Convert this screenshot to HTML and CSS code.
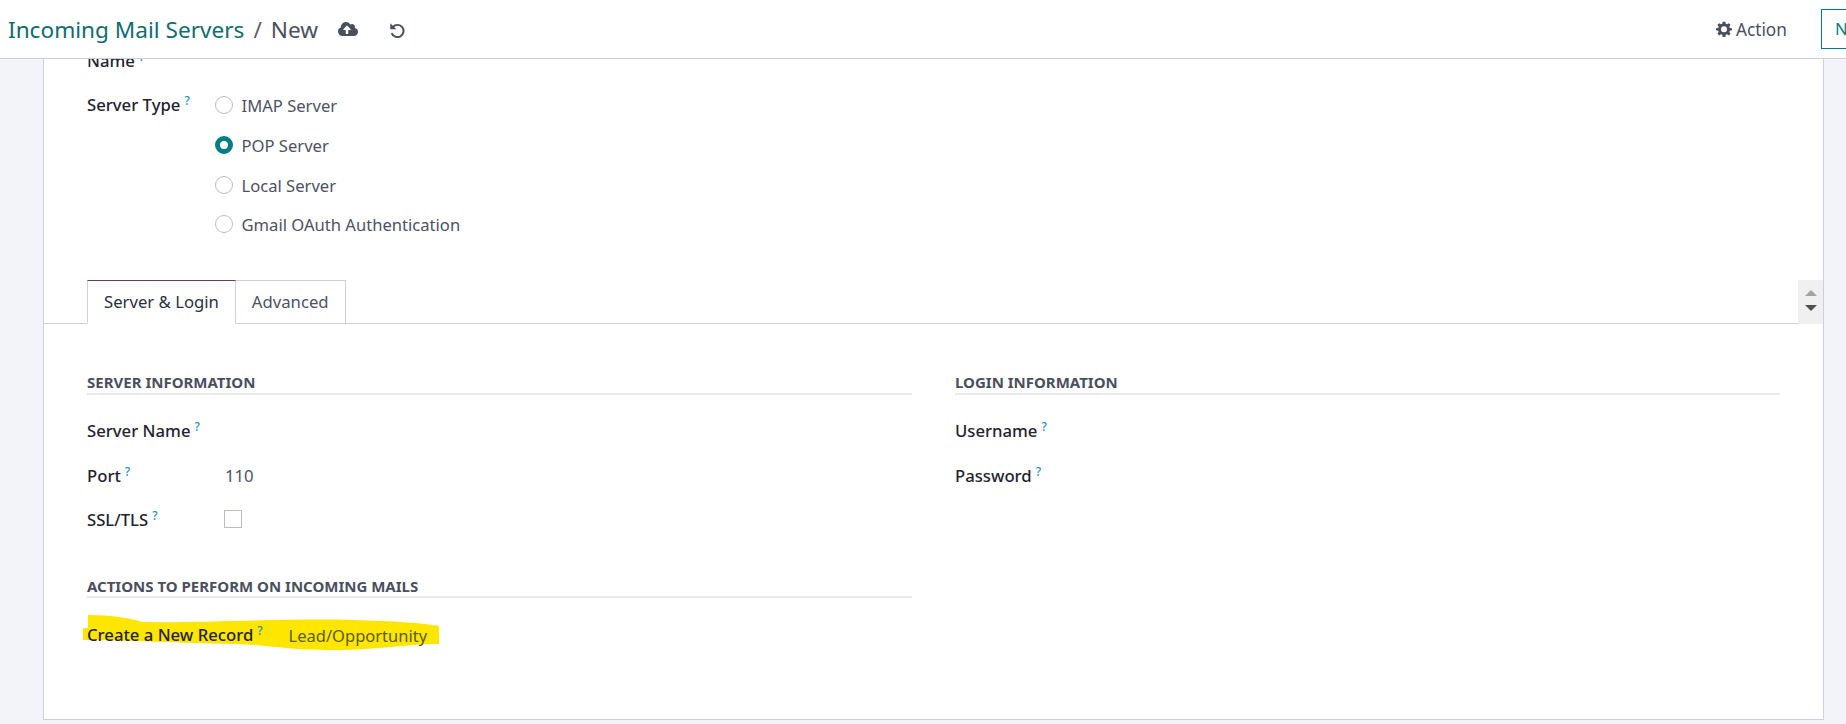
FILE: index.html
```html
<!DOCTYPE html>
<html lang="en">
<head>
<meta charset="utf-8">
<title>Incoming Mail Servers / New</title>
<link rel="stylesheet" href="styles.css">
</head>
<body>
<header class="topbar">
  <div class="crumbs">
    <span class="crumb-link">Incoming Mail Servers</span>
    <span class="crumb-sep">/</span>
    <span class="crumb-cur">New</span>
    <svg class="ico-cloud" viewBox="0 0 640 512"><path fill="#4a4f5e" d="M537.6 226.6c4.1-10.7 6.4-22.4 6.4-34.6 0-53-43-96-96-96-19.7 0-38.1 6-53.3 16.2C367 64.2 315.3 32 256 32c-88.4 0-160 71.6-160 160 0 2.7.1 5.4.2 8.1C40.2 219.8 0 273.2 0 336c0 79.5 64.5 144 144 144h368c70.7 0 128-57.3 128-128 0-61.9-44-113.6-102.4-125.4zM393.4 288H328v112c0 8.8-7.2 16-16 16h-48c-8.8 0-16-7.2-16-16V288h-65.4c-14.3 0-21.4-17.2-11.3-27.3l105.4-105.4c6.2-6.2 16.4-6.2 22.6 0l105.4 105.4c10.1 10.1 2.9 27.3-11.3 27.3z"/></svg>
    <svg class="ico-undo" viewBox="0 0 24 24"><path fill="none" stroke="#4a4f5e" stroke-width="2.8" d="M7 8.2A8.6 8.6 0 1 1 5.2 17"/><path fill="#4a4f5e" d="M3.2 3.2v8.6h8.6z"/></svg>
  </div>
  <div class="top-actions">
    <span class="action"><svg class="ico-gear" viewBox="0 0 24 24"><path fill="#4a4f5e" fill-rule="evenodd" d="M10 1h4l.6 3.2 1.9.8L19.200 3.200l2.600 2.600-1.800 2.700.8 1.900L24 11v3l-3.200.6-.8 1.900 1.800 2.700-2.600 2.600-2.700-1.800-1.900.8L14 24h-4l-.6-3.200-1.900-.8-2.700 1.800-2.600-2.600L4 16.500l-.8-1.900L0 14v-3l3.200-.6.8-1.900-1.800-2.700 2.600-2.600L7.500 5l1.900-.8zM12 8a4.500 4.500 0 1 0 0 9 4.500 4.500 0 0 0 0-9z"/></svg>Action</span>
    <span class="new-btn">New</span>
  </div>
</header>
<main class="stage">
  <section class="sheet">
    <div class="head-fields">
      <div class="row name-row"><span class="lab">Name<sup>?</sup></span></div>
      <div class="row type-row">
        <span class="lab lab-type">Server Type<sup>?</sup></span>
        <div class="radios">
          <label class="radio"><i class="dot"></i>IMAP Server</label>
          <label class="radio"><i class="dot on"></i>POP Server</label>
          <label class="radio"><i class="dot"></i>Local Server</label>
          <label class="radio"><i class="dot"></i>Gmail OAuth Authentication</label>
        </div>
      </div>
    </div>
    <div class="tabs">
      <span class="tab active">Server &amp; Login</span>
      <span class="tab">Advanced</span>
      <div class="scroller"><i class="up"></i><i class="down"></i></div>
    </div>
    <div class="panel">
      <div class="col">
        <h3 class="sec">SERVER INFORMATION</h3>
        <div class="field f-name"><span class="lab">Server Name<sup>?</sup></span></div>
        <div class="field f-port"><span class="lab">Port<sup>?</sup></span><span class="val">110</span></div>
        <div class="field f-ssl"><span class="lab">SSL/TLS<sup>?</sup></span><i class="check"></i></div>
        <h3 class="sec sec-actions">ACTIONS TO PERFORM ON INCOMING MAILS</h3>
        <div class="field f-create">
          <svg class="marker" viewBox="0 0 356 36" preserveAspectRatio="none"><path fill="#ffe600" d="M5 0C30 0 45 3 60 7C120 8 210 3 270 5C310 6 340 8 356 11L356 29C320 29 300 35 250 35C200 35 190 30 150 29C100 28 40 25 0 25L0 13L5 13Z"/></svg>
          <span class="lab lab-create">Create a New Record<sup>?</sup></span><span class="val val-create">Lead/Opportunity</span>
        </div>
      </div>
      <div class="col">
        <h3 class="sec">LOGIN INFORMATION</h3>
        <div class="field f-name"><span class="lab">Username<sup>?</sup></span></div>
        <div class="field f-port"><span class="lab">Password<sup>?</sup></span></div>
      </div>
    </div>
  </section>
</main>
</body>
</html>
```

FILE: styles.css
```css
* { box-sizing: border-box; }
html, body { margin: 0; height: 724px; overflow: hidden; }
body {
  display: flex;
  flex-direction: column;
  background: #f3f4f9;
  font-family: "Noto Sans", "Open Sans", sans-serif;
  font-size: 16.7px;
  color: #4a4f5e;
}
.topbar {
  flex: none;
  height: 59px;
  background: #fff;
  border-bottom: 1px solid #cfcfd9;
  display: flex;
  align-items: center;
  justify-content: space-between;
  padding-left: 8px;
  overflow: hidden;
}
.crumbs { display: flex; align-items: center; }
.crumb-link { font-size: 22.6px; color: #0f6d6f; }
.crumb-sep { font-size: 22.6px; margin-left: 9px; color: #5b6070; }
.crumb-cur { font-size: 22.6px; margin-left: 9px; color: #4a4f5e; }
.ico-cloud { width: 20px; height: 16px; margin-left: 20px; }
.ico-undo { width: 17px; height: 17px; margin-left: 30px; }
.top-actions { display: flex; align-items: center; flex: none; width: 131px; }
.action { display: flex; align-items: center; font-size: 17.2px; width: 106px; flex: none; padding-left: 1px; }
.ico-gear { width: 16px; height: 16px; margin-right: 4px; }
.new-btn {
  flex: none;
  width: 70px;
  height: 40px;
  border: 1px solid #017e84;
  color: #017e84;
  padding: 7px 13px;
  font-size: 16.7px;
}
.stage { flex: 1; overflow: hidden; padding: 0 22px 0 43px; }
.sheet {
  margin-top: -20px;
  height: 681px;
  background: #fff;
  border: 1px solid #cfcfd9;
  position: relative;
}
.head-fields { padding: 0 0 0 43px; height: 231px; }
.row { display: flex; }
.name-row { height: 27px; line-height: 24px; margin-top: 9px; }
.type-row { margin-top: 9px; }
.lab { color: #1f2330; font-weight: 500; font-size: 16.7px; }
.lab sup { color: #1f93bd; font-size: 12px; font-weight: 500; margin-left: 4px; vertical-align: 6px; line-height: 0; }
.lab-type { width: 128px; padding-top: 8px; line-height: 24px; }
.radios { display: flex; flex-direction: column; }
.radio { display: flex; align-items: center; height: 40px; color: #4d5263; font-size: 16.6px; }
.radio:last-child { margin-top: -1px; }
.dot { width: 18px; height: 18px; border-radius: 50%; border: 1px solid #bcbcc4; margin-right: 8.500px; background: #fff; }
.dot.on { border: 5px solid #017e84; }
.tabs {
  display: flex;
  height: 44px;
  padding-left: 43px;
  border-bottom: 1px solid #cfcfd9;
  position: relative;
}
.tab {
  height: 44px;
  padding: 9px 16px 0;
  border: 1px solid #cfcfd9;
  border-left-width: 0;
  background: #fff;
  font-size: 16.7px;
  line-height: 24px;
  color: #4d5263;
}
.tab.active {
  border-left-width: 1px;
  border-top-color: #71395f;
  border-bottom-color: #fff;
  color: #2b3040;
}
.scroller {
  position: absolute;
  right: 0;
  top: 0;
  width: 25px;
  height: 44px;
  background: #f0f0f0;
  display: flex;
  flex-direction: column;
  align-items: center;
  gap: 9px;
  padding-top: 10px;
}
.up { border: 6px solid transparent; border-top: 0; border-bottom: 6px solid #a3a3a3; }
.down { border: 6px solid transparent; border-bottom: 0; border-top: 6px solid #505050; }
.panel {
  display: grid;
  grid-template-columns: 825px 825px;
  column-gap: 43px;
  padding: 48px 0 0 43px;
}
.sec {
  margin: 0;
  height: 23px;
  border-bottom: 2px solid #e7e9ed;
  font-size: 15px;
  font-weight: 700;
  line-height: 20px;
  color: #4a4f5e;
}
.sec-actions { margin-top: 44px; height: 22px; }
.field { display: flex; position: relative; line-height: 24px; }
.f-name { margin-top: 24px; }
.f-port { margin-top: 21px; }
.f-ssl { margin-top: 20px; }
.f-create { margin-top: 25px; }
.field > .lab { width: 137px; flex: none; }
.val { color: #4d5263; font-size: 16.7px; padding-left: 1px; }
.check { width: 18px; height: 18px; border: 1px solid #bcbcc4; background: #fff; margin-top: 2px; }
.field > .lab-create { width: auto; position: relative; }
.val-create { position: relative; margin-left: 25px; margin-top: 1px; color: #5a5c1f; font-size: 16.5px; }
.marker { position: absolute; left: -4px; top: -8px; width: 356px; height: 36px; }
```
